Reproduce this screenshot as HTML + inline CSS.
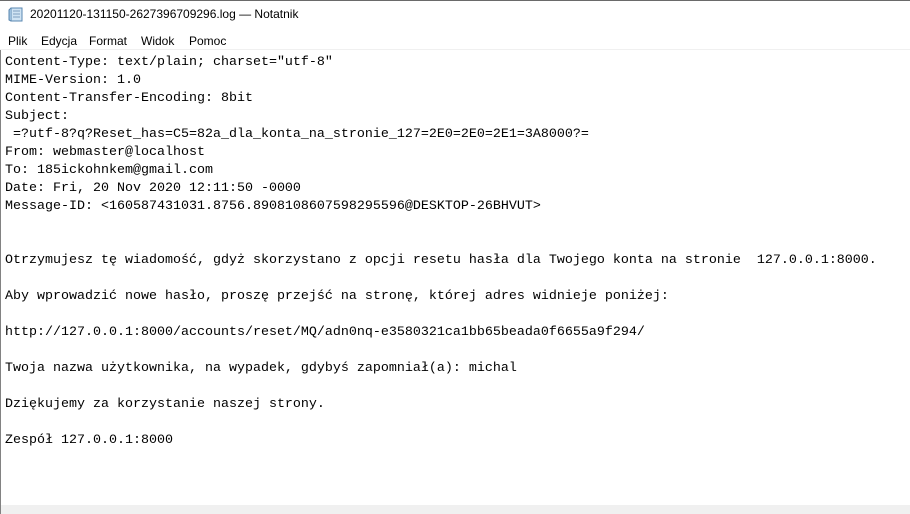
<!DOCTYPE html>
<html><head><meta charset="utf-8"><style>
html,body{margin:0;padding:0;width:910px;height:514px;overflow:hidden;background:#fff;position:relative}
.top{position:absolute;left:0;top:0;width:910px;height:1px;background:#6a6a6a}
.title{position:absolute;left:30px;top:7px;font:12px "Liberation Sans",sans-serif;color:#000}
.menu{position:absolute;left:0;top:32px;font:12px "Liberation Sans",sans-serif;color:#000}
.menu span{position:absolute;top:2px;white-space:nowrap}
.sep{position:absolute;left:0;top:49px;width:910px;height:1px;background:#f0f0f0}
.lb{position:absolute;left:0;top:50px;width:1px;height:464px;background:#828282}
pre{position:absolute;left:5px;top:54px;margin:0;font:13.33px/18px "Liberation Mono",monospace;color:#000}
.sb{position:absolute;left:1px;top:505px;width:909px;height:9px;background:#f0f0f0}
</style></head><body>
<div class="top"></div>
<svg style="position:absolute;left:8px;top:6px" width="16" height="16" viewBox="0 0 16 16"><rect x="3" y="2" width="11" height="13" fill="#cfe3f3" stroke="#5a87b0"/><path d="M3 2 L1 4 L1 14 L3 15" fill="#9dc0de" stroke="#5a87b0"/><path d="M5 5h7M5 8h7M5 11h7" stroke="#7f9fbf"/></svg>
<div class="title">20201120-131150-2627396709296.log — Notatnik</div>
<div class="menu"><span style="left:8px">Plik</span><span style="left:41px">Edycja</span><span style="left:89px">Format</span><span style="left:141px">Widok</span><span style="left:189px">Pomoc</span></div>
<div class="sep"></div>
<div class="lb"></div>
<pre>Content-Type: text/plain; charset="utf-8"
MIME-Version: 1.0
Content-Transfer-Encoding: 8bit
Subject:
 =?utf-8?q?Reset_has=C5=82a_dla_konta_na_stronie_127=2E0=2E0=2E1=3A8000?=
From: webmaster@localhost
To: 185ickohnkem@gmail.com
Date: Fri, 20 Nov 2020 12:11:50 -0000
Message-ID: &lt;160587431031.8756.8908108607598295596@DESKTOP-26BHVUT&gt;


Otrzymujesz tę wiadomość, gdyż skorzystano z opcji resetu hasła dla Twojego konta na stronie  127.0.0.1:8000.

Aby wprowadzić nowe hasło, proszę przejść na stronę, której adres widnieje poniżej:

http://127.0.0.1:8000/accounts/reset/MQ/adn0nq-e3580321ca1bb65beada0f6655a9f294/

Twoja nazwa użytkownika, na wypadek, gdybyś zapomniał(a): michal

Dziękujemy za korzystanie naszej strony.

Zespół 127.0.0.1:8000</pre>
<div class="sb"></div>
</body></html>
